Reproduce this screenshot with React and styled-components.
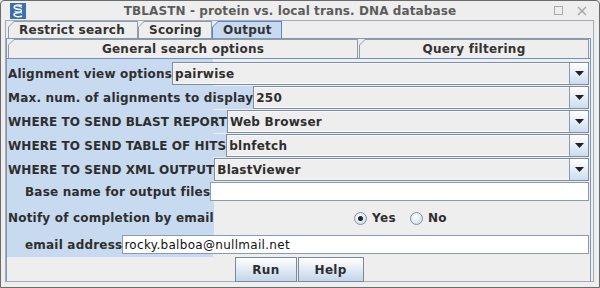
import styled, { createGlobalStyle } from "styled-components";

const GlobalStyle = createGlobalStyle`
  html, body {
    margin: 0;
    padding: 0;
    background: #eeeeee;
  }
  body {
    font-family: "DejaVu Sans", "Liberation Sans", sans-serif;
  }
`;

const BLUE = "#c8daf0";
const GRAY = "#eeeeee";

// window chrome
const Window = styled.div`
  width: 600px;
  height: 288px;
  box-sizing: border-box;
  border: 1px solid #6b6b6b;
  border-radius: 4px 4px 0 0;
  background: ${GRAY};
  display: flex;
  flex-direction: column;
  padding: 0 5px 5px 4px;
`;

const TitleBar = styled.div`
  height: 19px;
  display: flex;
  align-items: center;
  padding-left: 5px;
`;

const Title = styled.div`
  flex: 1;
  text-align: center;
  font-size: 12px;
  font-weight: bold;
  letter-spacing: 0.1px;
  color: #5c5c5c;
  white-space: nowrap;
`;

const WinControls = styled.div`
  display: flex;
  align-items: center;
  gap: 14px;
  padding-right: 7px;
`;

const Frame = styled.div`
  flex: 1;
  border: 1px solid #a3acb6;
  padding-right: 2px;
  display: flex;
  flex-direction: column;
  min-height: 0;
`;

// tabs
const TabStrip = styled.div`
  height: 17px;
  display: flex;
  align-items: flex-end;
  padding-left: ${(p) => p.$indent || 0}px;
`;

const TabEdge = styled.div`
  width: ${(p) => p.$w}px;
  height: ${(p) => p.$h}px;
  margin-right: ${(p) => p.$gap || 0}px;
  background: ${(p) => (p.$selected ? "#6382bf" : "#8e9bab")};
  clip-path: polygon(6px 0, 100% 0, 100% 100%, 0 100%, 0 6px);
  padding: 1px 1px 0 1px;
  box-sizing: border-box;
`;

const TabFace = styled.div`
  height: 100%;
  background: ${(p) => (p.$selected ? BLUE : GRAY)};
  clip-path: polygon(5px 0, 100% 0, 100% 100%, 0 100%, 0 5px);
  display: flex;
  align-items: center;
  justify-content: ${(p) => (p.$center ? "center" : "flex-start")};
  padding-left: ${(p) => (p.$center ? 0 : 10)}px;
  font-size: 12px;
  font-weight: bold;
  letter-spacing: 0.25px;
  color: #333333;
  white-space: nowrap;
`;

const TabBody = styled.div`
  flex: 1;
  border: 1px solid #8497b0;
  border-bottom: none;
  display: flex;
  flex-direction: column;
  min-height: 0;
`;

const SubTabStrip = styled.div`
  height: 19px;
  display: flex;
  align-items: flex-end;
  padding-left: 1px;
`;

// form
const Form = styled.div`
  flex: 1;
  border-top: 1px solid #6d8fd0;
  background: linear-gradient(to right, ${BLUE} 206px, ${GRAY} 206px);
  padding: 3px 1px 3px 0;
  display: flex;
  flex-direction: column;
  gap: 1px;
`;

const Row = styled.div`
  display: flex;
  height: ${(p) => p.$h}px;
`;

const Label = styled.div`
  background: ${BLUE};
  display: flex;
  align-items: center;
  padding-left: ${(p) => p.$indent || 1}px;
  font-size: 12px;
  font-weight: bold;
  letter-spacing: ${(p) => (p.$caps ? 0.07 : 0.2)}px;
  color: #2e2e2e;
  white-space: nowrap;
`;

const Combo = styled.div`
  flex: 1;
  display: flex;
  border: 1px solid #7d8ea4;
  background: ${GRAY};
  box-shadow: inset 0 0 0 1px #f7f7f7;
`;

const ComboText = styled.div`
  flex: 1;
  display: flex;
  align-items: center;
  padding-left: 2px;
  font-size: 12px;
  font-weight: bold;
  letter-spacing: 0.25px;
  color: #2e2e2e;
`;

const ArrowButton = styled.div`
  width: 18px;
  border-left: 1px solid #8a9ab0;
  background: linear-gradient(#ffffff, #cddcee);
  display: flex;
  align-items: center;
  justify-content: center;
`;

const TextField = styled.div`
  flex: 1;
  border: 1px solid #8a9ab0;
  background: #ffffff;
  display: flex;
  align-items: center;
  padding-left: 1px;
  font-size: 12px;
  letter-spacing: 0.3px;
  color: #111111;
`;

const RadioCell = styled.div`
  flex: 1;
  display: flex;
  align-items: center;
  justify-content: center;
  gap: 14px;
  background: ${GRAY};
  padding-right: 2px;
`;

const RadioOption = styled.label`
  display: flex;
  align-items: center;
  gap: 5px;
  font-size: 12px;
  font-weight: bold;
  letter-spacing: 0.3px;
  color: #2e2e2e;
`;

const RadioDot = styled.span`
  width: 11px;
  height: 11px;
  border-radius: 50%;
  border: 1px solid #8191a8;
  background: radial-gradient(circle at 40% 35%, #ffffff, #c4d6ec);
  display: flex;
  align-items: center;
  justify-content: center;
  &::after {
    content: "";
    width: 5px;
    height: 5px;
    border-radius: 50%;
    background: ${(p) => (p.$on ? "#222" : "transparent")};
  }
`;

const ButtonBar = styled.div`
  height: 25px;
  display: flex;
  justify-content: center;
  padding-left: 2px;
`;

const Button = styled.button`
  height: 25px;
  padding: 0 16px;
  margin: 0;
  border: 1px solid #7a8a9c;
  background: linear-gradient(#ffffff, #c3d5ea);
  font-family: "DejaVu Sans", sans-serif;
  font-size: 12px;
  font-weight: bold;
  letter-spacing: 0.3px;
  color: #2e2e2e;
  & + & {
    margin-left: 1px;
  }
`;

function AppIcon() {
  return (
    <svg width="16" height="16" viewBox="0 0 16 16">
      <rect width="16" height="16" fill="#3d6fab" />
      <path d="M12 2.5 C7 1 3 3 4.5 5 C6 7 12 5.5 11.5 8 C11 10.5 4 9 4 11.5 C4 13.5 9 14.5 12 13" fill="none" stroke="#fff" strokeWidth="1.4" />
      <path d="M4 2.5 C7 3 12 3 11.5 5" fill="none" stroke="#dfe9f5" strokeWidth="1.2" />
      <path d="M4.5 8 C5 9 11 8.5 12 10.5" fill="none" stroke="#dfe9f5" strokeWidth="1.2" />
    </svg>
  );
}

function Arrow() {
  return (
    <svg width="9" height="5" viewBox="0 0 9 5">
      <path d="M0 0 H9 L4.5 5 Z" fill="#222" />
    </svg>
  );
}

function Tab({ w, h = 17, gap, selected, center, children }) {
  return (
    <TabEdge $w={w} $h={h} $gap={gap} $selected={selected}>
      <TabFace $selected={selected} $center={center}>{children}</TabFace>
    </TabEdge>
  );
}

function ComboRow({ label, value, caps }) {
  return (
    <Row $h={23}>
      <Label $caps={caps}>{label}</Label>
      <Combo>
        <ComboText>{value}</ComboText>
        <ArrowButton><Arrow /></ArrowButton>
      </Combo>
    </Row>
  );
}

function App() {
  return (
    <>
      <GlobalStyle />
      <Window>
        <TitleBar>
          <AppIcon />
          <Title>TBLASTN - protein vs. local trans. DNA database</Title>
          <WinControls>
            <svg width="9" height="9" viewBox="0 0 9 9">
              <rect x="0.5" y="0.5" width="8" height="8" fill="none" stroke="#a9a9a9" />
            </svg>
            <svg width="10" height="10" viewBox="0 0 10 10">
              <path d="M1 1 L9 9 M9 1 L1 9" stroke="#a9a9a9" strokeWidth="1.6" />
            </svg>
          </WinControls>
        </TitleBar>
        <Frame>
          <TabStrip $indent={2}>
            <Tab w={130}>Restrict search</Tab>
            <Tab w={74}>Scoring</Tab>
            <Tab w={70} selected>Output</Tab>
          </TabStrip>
          <TabBody>
            <SubTabStrip>
              <Tab w={350} h={19} gap={1} center>General search options</Tab>
              <Tab w={230} h={19} center>Query filtering</Tab>
            </SubTabStrip>
            <Form>
              <ComboRow label="Alignment view options" value="pairwise" />
              <ComboRow label="Max. num. of alignments to display" value="250" />
              <ComboRow label="WHERE TO SEND BLAST REPORT" value="Web Browser" caps />
              <ComboRow label="WHERE TO SEND TABLE OF HITS" value="blnfetch" caps />
              <ComboRow label="WHERE TO SEND XML OUTPUT" value="BlastViewer" caps />
              <Row $h={19}>
                <Label $indent={18}>Base name for output files</Label>
                <TextField />
              </Row>
              <Row $h={32}>
                <Label>Notify of completion by email</Label>
                <RadioCell>
                  <RadioOption><RadioDot $on />Yes</RadioOption>
                  <RadioOption><RadioDot />No</RadioOption>
                </RadioCell>
              </Row>
              <Row $h={19}>
                <Label $indent={18}>email address</Label>
                <TextField>rocky.balboa@nullmail.net</TextField>
              </Row>
            </Form>
            <ButtonBar>
              <Button>Run</Button>
              <Button>Help</Button>
            </ButtonBar>
          </TabBody>
        </Frame>
      </Window>
    </>
  );
}

export default App;
